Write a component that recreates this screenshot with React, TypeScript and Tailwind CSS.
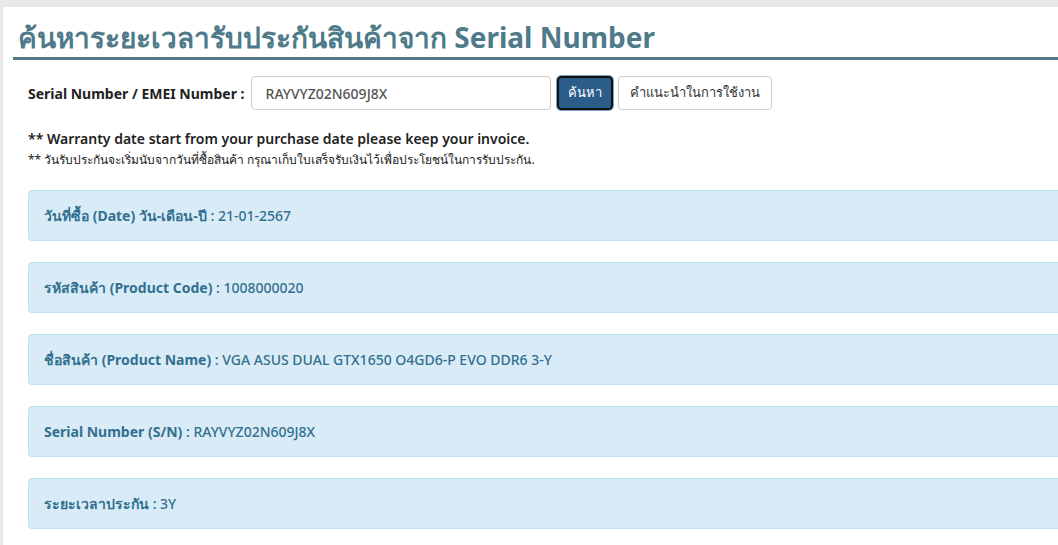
const rows: { label: string; value: string }[] = [
  { label: "วันที่ซื้อ (Date) วัน-เดือน-ปี", value: "21-01-2567" },
  { label: "รหัสสินค้า (Product Code)", value: "1008000020" },
  { label: "ชื่อสินค้า (Product Name)", value: "VGA ASUS DUAL GTX1650 O4GD6-P EVO DDR6 3-Y" },
  { label: "Serial Number (S/N)", value: "RAYVYZ02N609J8X" },
  { label: "ระยะเวลาประกัน", value: "3Y" },
];

export default function App() {
  return (
    <div
      className="min-h-[545px] bg-[#e9e9eb] pt-[7px] pl-[3px] overflow-hidden"
      style={{ fontFamily: '"Noto Sans", "Liberation Sans", sans-serif' }}
    >
      <div className="bg-white min-h-[538px] pl-[10px]">
        <h1 className="pt-[11px] pl-[5px] text-[28px] leading-[38px] font-bold text-[#4e7a8a] border-b-[3px] border-[#4f7b89] pb-[1px]">
          ค้นหาระยะเวลารับประกันสินค้าจาก Serial Number
        </h1>

        <div className="pl-[15px] pr-[3px]">
          <div className="flex items-center mt-[16px] text-[14px] text-[#222]">
            <span className="font-bold mr-[6px]">Serial Number / EMEI Number :</span>
            <div className="w-[300px] h-[34px] border border-[#ccc] rounded-[4px] flex items-center px-[14px] text-[#555] text-[14px] font-medium">
              RAYVYZ02N609J8X
            </div>
            <button className="ml-[6px] h-[34px] px-[9px] rounded-[4px] bg-[#2a5d8a] text-white text-[13px] border-2 border-[#111] outline outline-1 outline-[#7aa0c4]">
              ค้นหา
            </button>
            <button className="ml-[5px] h-[34px] px-[11px] rounded-[4px] bg-white text-[#333] text-[13px] border border-[#ccc]">
              คำแนะนำในการใช้งาน
            </button>
          </div>

          <p className="mt-[19px] text-[14px] text-[#222] font-semibold leading-[20px]">
            ** Warranty date start from your purchase date please keep your invoice.
          </p>
          <p className="mt-[1px] text-[12px] text-[#222] leading-[20px]">
            ** วันรับประกันจะเริ่มนับจากวันที่ซื้อสินค้า กรุณาเก็บใบเสร็จรับเงินไว้เพื่อประโยชน์ในการรับประกัน.
          </p>

          <div className="mt-[20px] flex flex-col gap-[21px]">
            {rows.map((r) => (
              <div
                key={r.label}
                className="h-[51px] flex items-center px-[15px] bg-[#d9ebf7] border border-[#bce4f0] border-r-0 rounded-l-[4px] text-[14px] text-[#31708f] -mr-[3px]"
              >
                <span className="font-bold">{r.label}</span>
                <span className="font-medium">&nbsp;: {r.value}</span>
              </div>
            ))}
          </div>
        </div>
      </div>
    </div>
  );
}
